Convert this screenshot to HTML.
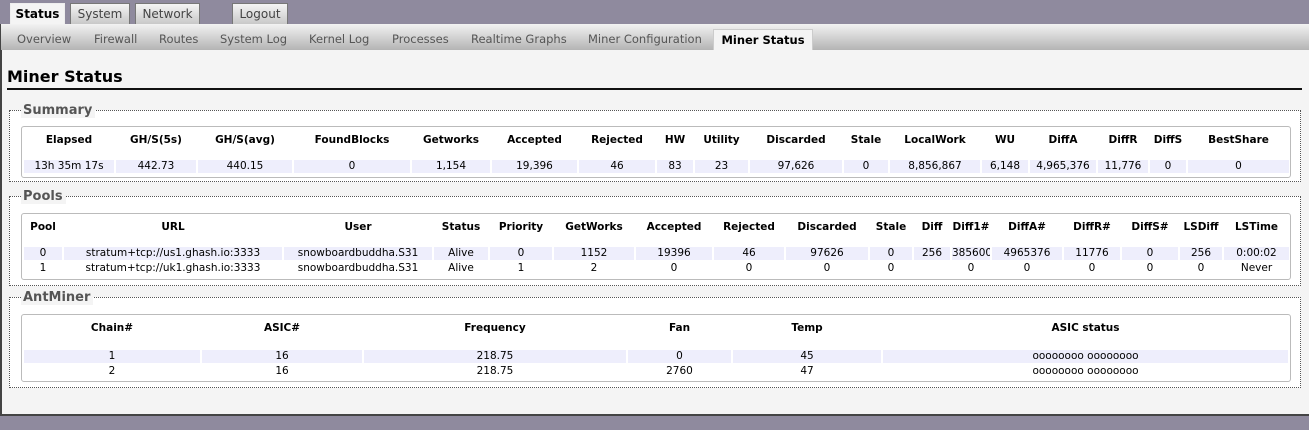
<!DOCTYPE html>
<html><head><meta charset="utf-8"><style>
*{margin:0;padding:0;box-sizing:border-box}
body{width:1309px;height:430px;background:#8f8a9e;font-family:"DejaVu Sans","Liberation Sans",sans-serif;font-size:11px;color:#000;position:relative;overflow:hidden}
.tab{position:absolute;top:3px;height:21px;border:1px solid #777;border-bottom:none;background:linear-gradient(#f4f4f4,#c8c8c8);color:#444;font-size:12px;text-align:center;line-height:20px}
.tab.act{background:#f4f4f4;color:#000;font-weight:bold;height:22px;border-color:#eee}
#sub{position:absolute;top:24px;left:0;width:1309px;height:26px;background:linear-gradient(#f2f2f2,#b4b4b4);border-left:1px solid #444}
.st{position:absolute;top:8px;color:#555;font-size:11.5px}
#cont{position:absolute;top:50px;left:0;width:1309px;height:366px;background:#f4f4f4;border-left:2px solid #444;border-bottom:2px solid #444}
h2{position:absolute;left:7px;top:67px;font-size:16px;font-weight:bold;width:1295px;border-bottom:2px solid #111;height:23px;line-height:20px}
.fs{position:absolute;left:9px;width:1292px;border:1px dotted #555;background:#fff}
.lg{position:absolute;left:11px;top:-8px;background:#f4f4f4;padding:0 3px 0 2px;font-weight:bold;color:#555;font-size:13px;line-height:15px}
.bx{position:absolute;left:11px;width:1270px;border:1px solid #bbb;border-radius:3px;background:#fff;overflow:hidden}
table{position:absolute;left:0;width:1268px;border-spacing:2px;table-layout:fixed;border-collapse:separate}
th{font-weight:bold;text-align:center;height:18px;font-size:10.5px;white-space:nowrap}
td{text-align:center;height:13px;line-height:13px;font-size:10.5px;padding:0;white-space:nowrap;overflow:hidden}
tr.a td{background:#eeeefc}
</style></head><body>
<div class="tab act" style="left:10px;width:55px">Status</div>
<div class="tab" style="left:70px;width:60px">System</div>
<div class="tab" style="left:135px;width:65px">Network</div>
<div class="tab" style="left:232px;width:56px">Logout</div>
<div id="sub">
<span class="st" style="left:16px">Overview</span>
<span class="st" style="left:93px">Firewall</span>
<span class="st" style="left:158px">Routes</span>
<span class="st" style="left:219px">System Log</span>
<span class="st" style="left:308px">Kernel Log</span>
<span class="st" style="left:391px">Processes</span>
<span class="st" style="left:470px">Realtime Graphs</span>
<span class="st" style="left:587px">Miner Configuration</span>
<div style="position:absolute;left:712px;top:5px;width:100px;height:21px;background:#f4f4f4;border:1px solid #ccc;border-bottom:none;font-weight:bold;font-size:11.5px;text-align:center;line-height:20px">Miner Status</div>
</div>
<div id="cont"></div>
<h2>Miner Status</h2>

<div class="fs" style="top:110px;height:72px"><div class="lg">Summary</div>
<div class="bx" style="top:15px;height:52px">
<table style="top:1px"><colgroup><col style="width:90px"><col style="width:80px"><col style="width:94px"><col style="width:116px"><col style="width:78px"><col style="width:85px"><col style="width:76px"><col style="width:36px"><col style="width:53px"><col style="width:92px"><col style="width:44px"><col style="width:90px"><col style="width:46px"><col style="width:66px"><col style="width:50px"><col style="width:36px"><col style="width:101px"></colgroup>
<tr><th style="height:20px">Elapsed</th><th>GH/S(5s)</th><th>GH/S(avg)</th><th>FoundBlocks</th><th>Getworks</th><th>Accepted</th><th>Rejected</th><th>HW</th><th>Utility</th><th>Discarded</th><th>Stale</th><th>LocalWork</th><th>WU</th><th>DiffA</th><th>DiffR</th><th>DiffS</th><th>BestShare</th></tr>
<tr><td colspan="17" style="height:6px"></td></tr>
<tr class="a"><td>13h 35m 17s</td><td>442.73</td><td>440.15</td><td>0</td><td>1,154</td><td>19,396</td><td>46</td><td>83</td><td>23</td><td>97,626</td><td>0</td><td>8,856,867</td><td>6,148</td><td>4,965,376</td><td>11,776</td><td>0</td><td>0</td></tr>
</table></div></div>

<div class="fs" style="top:196px;height:90px"><div class="lg">Pools</div>
<div class="bx" style="top:16px;height:67px">
<table style="top:1px"><colgroup><col style="width:38px"><col style="width:218px"><col style="width:148px"><col style="width:54px"><col style="width:62px"><col style="width:80px"><col style="width:76px"><col style="width:70px"><col style="width:82px"><col style="width:42px"><col style="width:36px"><col style="width:38px"><col style="width:70px"><col style="width:56px"><col style="width:56px"><col style="width:42px"><col style="width:65px"></colgroup>
<tr><th style="height:20px">Pool</th><th>URL</th><th>User</th><th>Status</th><th>Priority</th><th>GetWorks</th><th>Accepted</th><th>Rejected</th><th>Discarded</th><th>Stale</th><th>Diff</th><th>Diff1#</th><th>DiffA#</th><th>DiffR#</th><th>DiffS#</th><th>LSDiff</th><th>LSTime</th></tr>
<tr><td colspan="17" style="height:6px"></td></tr>
<tr class="a"><td>0</td><td>stratum+tcp://us1.ghash.io:3333</td><td>snowboardbuddha.S31</td><td>Alive</td><td>0</td><td>1152</td><td>19396</td><td>46</td><td>97626</td><td>0</td><td>256</td><td>385600</td><td>4965376</td><td>11776</td><td>0</td><td>256</td><td>0:00:02</td></tr>
<tr><td>1</td><td>stratum+tcp://uk1.ghash.io:3333</td><td>snowboardbuddha.S31</td><td>Alive</td><td>1</td><td>2</td><td>0</td><td>0</td><td>0</td><td>0</td><td></td><td>0</td><td>0</td><td>0</td><td>0</td><td>0</td><td>Never</td></tr>
</table></div></div>

<div class="fs" style="top:297px;height:91px"><div class="lg">AntMiner</div>
<div class="bx" style="top:16px;height:68px">
<table style="top:1px"><colgroup><col style="width:176px"><col style="width:160px"><col style="width:262px"><col style="width:103px"><col style="width:148px"><col style="width:405px"></colgroup>
<tr><th style="height:20px">Chain#</th><th>ASIC#</th><th>Frequency</th><th>Fan</th><th>Temp</th><th>ASIC status</th></tr>
<tr><td colspan="6" style="height:8px"></td></tr>
<tr class="a"><td>1</td><td>16</td><td>218.75</td><td>0</td><td>45</td><td>oooooooo oooooooo</td></tr>
<tr><td>2</td><td>16</td><td>218.75</td><td>2760</td><td>47</td><td>oooooooo oooooooo</td></tr>
</table></div></div>
</body></html>
